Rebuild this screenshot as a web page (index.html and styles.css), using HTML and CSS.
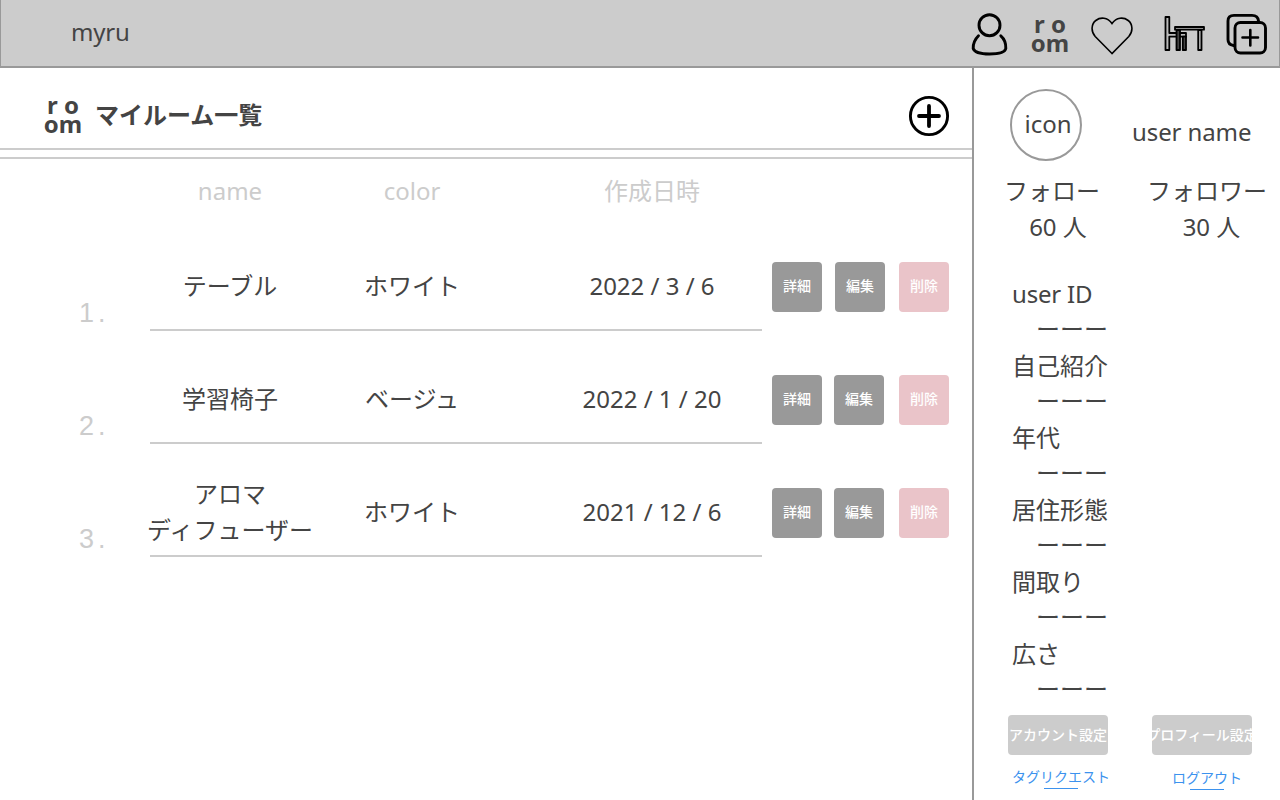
FILE: index.html
```html
<!DOCTYPE html>
<html lang="ja">
<head>
<meta charset="utf-8">
<title>myru</title>
<link rel="stylesheet" href="styles.css">
</head>
<body>
<header class="topbar">
  <span class="brand">myru</span>
  <nav class="nav">
    <svg class="nav-user" width="38" height="44" viewBox="0 0 38 44" fill="none" stroke="#000" stroke-width="2.900" stroke-linecap="round"><circle cx="18.500" cy="12.200" r="10.500"/><path d="M7.500 22.800C3.800 26.500 2 31 2.200 35.500C3.500 39.500 10 41 18.500 41C27 41 34 39.500 34.800 35.500C35 31 33.500 26 29.800 22.800"/></svg>
    <span class="room nav-room"><span>r o</span><span>om</span></span>
    <svg class="nav-heart" width="42" height="38" viewBox="0 0 42 38" fill="none" stroke="#000" stroke-width="1.600"><path d="M21 36.500L4.200 19.500C-.3 14.500 .2 7 4.800 3.500C9.500 -.1 16.500 .2 21 6.500C25.500 .2 32.500 -.1 37.200 3.500C41.800 7 42.300 14.500 37.800 19.500Z"/></svg>
    <svg class="nav-desk" width="42" height="37" viewBox="0 0 42 37" fill="#bbb" stroke="#000" stroke-width="1.800" stroke-linejoin="round"><path d="M2.500 2H6.300V18H23V21.700H6.300V35H2.500Z"/><path d="M19.800 21.700H23V35H19.800ZM13.500 15H17V35H13.500Z" fill="#444"/><path d="M35.200 15H38.500V35H35.200Z"/><path d="M12 12H41V14.700H12Z"/></svg>
    <svg class="nav-add" width="42" height="42" viewBox="0 0 42 42" fill="none" stroke="#000" stroke-width="2.900" stroke-linecap="round"><path d="M7.500 32.500C4 32 2 30 2 26.500V8Q2 2.400 8 2.400H26Q32 2.400 32.500 8"/><rect x="9" y="9.500" width="30.500" height="30.500" rx="5.500"/><path d="M24.300 17V32.500M16.500 24.500H32" stroke-width="2.600"/></svg>
  </nav>
</header>
<div class="page">
  <main class="main">
    <div class="heading">
      <span class="room"><span>r o</span><span>om</span></span>
      <h1 class="title">マイルーム一覧</h1>
      <svg class="plus" width="42" height="42" viewBox="0 0 42 42" fill="none" stroke="#000" stroke-linecap="round"><circle cx="21" cy="21" r="18.600" stroke-width="2.900"/><path d="M21 11V31M11 21H31" stroke-width="3.800"/></svg>
    </div>
    <div class="rule"></div>
    <div class="thead"><span>name</span><span>color</span><span>作成日時</span></div>
    <div class="row">
      <span class="num">1.</span>
      <div class="cells"><span>テーブル</span><span>ホワイト</span><span>2022 / 3 / 6</span></div>
      <div class="acts first"><button>詳細</button><button>編集</button><button class="del">削除</button></div>
    </div>
    <div class="row">
      <span class="num">2.</span>
      <div class="cells"><span>学習椅子</span><span>ベージュ</span><span>2022 / 1 / 20</span></div>
      <div class="acts"><button>詳細</button><button>編集</button><button class="del">削除</button></div>
    </div>
    <div class="row">
      <span class="num">3.</span>
      <div class="cells"><span>アロマ<br>ディフューザー</span><span>ホワイト</span><span>2021 / 12 / 6</span></div>
      <div class="acts"><button>詳細</button><button>編集</button><button class="del">削除</button></div>
    </div>
  </main>
  <aside class="side">
    <div class="profile"><div class="avatar">icon</div><div class="username">user name</div></div>
    <div class="follows">
      <div class="following">フォロー<div class="count">60 人</div></div>
      <div class="followers">フォロワー<div class="count">30 人</div></div>
    </div>
    <dl class="info">
      <dt class="latin">user ID</dt><dd>ーーー</dd>
      <dt>自己紹介</dt><dd>ーーー</dd>
      <dt>年代</dt><dd>ーーー</dd>
      <dt>居住形態</dt><dd>ーーー</dd>
      <dt>間取り</dt><dd>ーーー</dd>
      <dt>広さ</dt><dd>ーーー</dd>
    </dl>
    <div class="settings"><button><span>アカウント設定</span></button><button><span>プロフィール設定</span></button></div>
    <div class="links"><a class="tag">タグリクエスト</a><a class="logout">ログアウト</a></div>
  </aside>
</div>
</body>
</html>
```
FILE: styles.css
```css
* { box-sizing: border-box; }
body {
  margin: 0;
  width: 1280px;
  height: 800px;
  overflow: hidden;
  background: #fff;
  color: #444;
  font: 24px/36px "Noto Sans", "Noto Sans CJK JP", sans-serif;
}
svg { display: block; flex: none; }
button {
  border: 0;
  padding: 0;
  border-radius: 4px;
  color: #fff;
  font: 500 14px/20px "Noto Sans", "Noto Sans CJK JP", sans-serif;
}

.topbar {
  display: flex;
  justify-content: space-between;
  height: 68px;
  padding-left: 70px;
  background: #ccc;
  border: solid #999;
  border-width: 0 1px 2px;
}
.brand { padding-top: 14px; letter-spacing: -0.2px; }
.nav { display: flex; align-items: flex-start; padding-right: 11px; }
.nav-user { margin-top: 13px; }
.nav-room { margin: 14px 0 0 22px; }
.nav-heart { margin: 17px -1px 0 22px; }
.nav-desk { margin: 15px 0 0 31px; }
.nav-add { margin: 13px 0 0 21px; }
.room {
  display: flex;
  flex-direction: column;
  align-items: center;
  width: 38px;
  font-weight: 700;
  line-height: 19px;
  white-space: nowrap;
}

.page { display: flex; height: 732px; }
.main { width: 972px; }
.heading {
  display: flex;
  align-items: flex-start;
  height: 82px;
  padding: 27px 22px 0 44px;
  border-bottom: 2px solid #ccc;
}
.title { margin: 2px auto 0 13px; font-size: 24px; line-height: 36px; font-weight: 700; }
.rule { height: 9px; border-bottom: 2px solid #ccc; }
.thead, .cells {
  display: grid;
  grid-template-columns: 160px 204px 276px;
  justify-content: start;
  text-align: center;
  white-space: nowrap;
}
.thead { height: 59px; margin-left: 150px; padding-top: 14px; color: #ccc; }
.row { display: flex; height: 113px; }
.num {
  width: 150px;
  padding: 77px 0 0 79px;
  color: #ccc;
  font-family: "Liberation Sans", sans-serif;
  font-size: 27px;
  letter-spacing: 4px;
}
.cells { width: 612px; align-items: center; padding-top: 25px; border-bottom: 2px solid #ccc; }
.cells span:first-child { margin: 0 -10px; }
.acts { display: flex; padding: 44px 0 0 10px; }
.acts button { width: 50px; height: 50px; margin-right: 12px; padding-bottom: 2px; background: #999; }
.acts.first button:first-child { margin-right: 13px; }
.acts .del { margin: 0 0 0 3px; background: #eac4c9; }
.acts.first .del { margin-left: 2px; }

.side { width: 308px; border-left: 2px solid #999; }
.profile { display: flex; height: 105px; padding: 21px 0 0 36px; white-space: nowrap; }
.avatar {
  width: 72px;
  height: 72px;
  padding: 15px 0 0 4px;
  border: 2px solid #999;
  border-radius: 50%;
  text-align: center;
}
.username { margin: 25px 0 0 50px; letter-spacing: -0.1px; }
.follows { display: flex; height: 103px; text-align: center; white-space: nowrap; }
.following { width: 96px; margin-left: 30px; }
.followers { width: 120px; margin-left: 47px; }
.following .count { padding-left: 12px; }
.followers .count { padding-left: 9px; }
.info { margin: 0; padding-left: 38px; }
.latin { letter-spacing: -0.2px; }
.info dd { margin: -1px 0 1px 24px; }
.settings { display: flex; gap: 44px; padding: 7px 0 0 34px; }
.settings button {
  display: flex;
  justify-content: center;
  width: 100px;
  height: 40px;
  padding-top: 10px;
  overflow: hidden;
  background: #ccc;
  white-space: nowrap;
}
.settings span { flex: none; }
.links { display: flex; padding: 12px 0 0 38px; color: #3c92ee; font-size: 14px; line-height: 20px; }
.links a::after { content: ""; display: block; width: 34px; height: 1px; background: #3c92ee; }
.tag { width: 160px; }
.tag::after { margin: 1px 0 0 32px; }
.logout { padding-top: 1px; }
.logout::after { margin: 1px 0 0 18px; }
```
